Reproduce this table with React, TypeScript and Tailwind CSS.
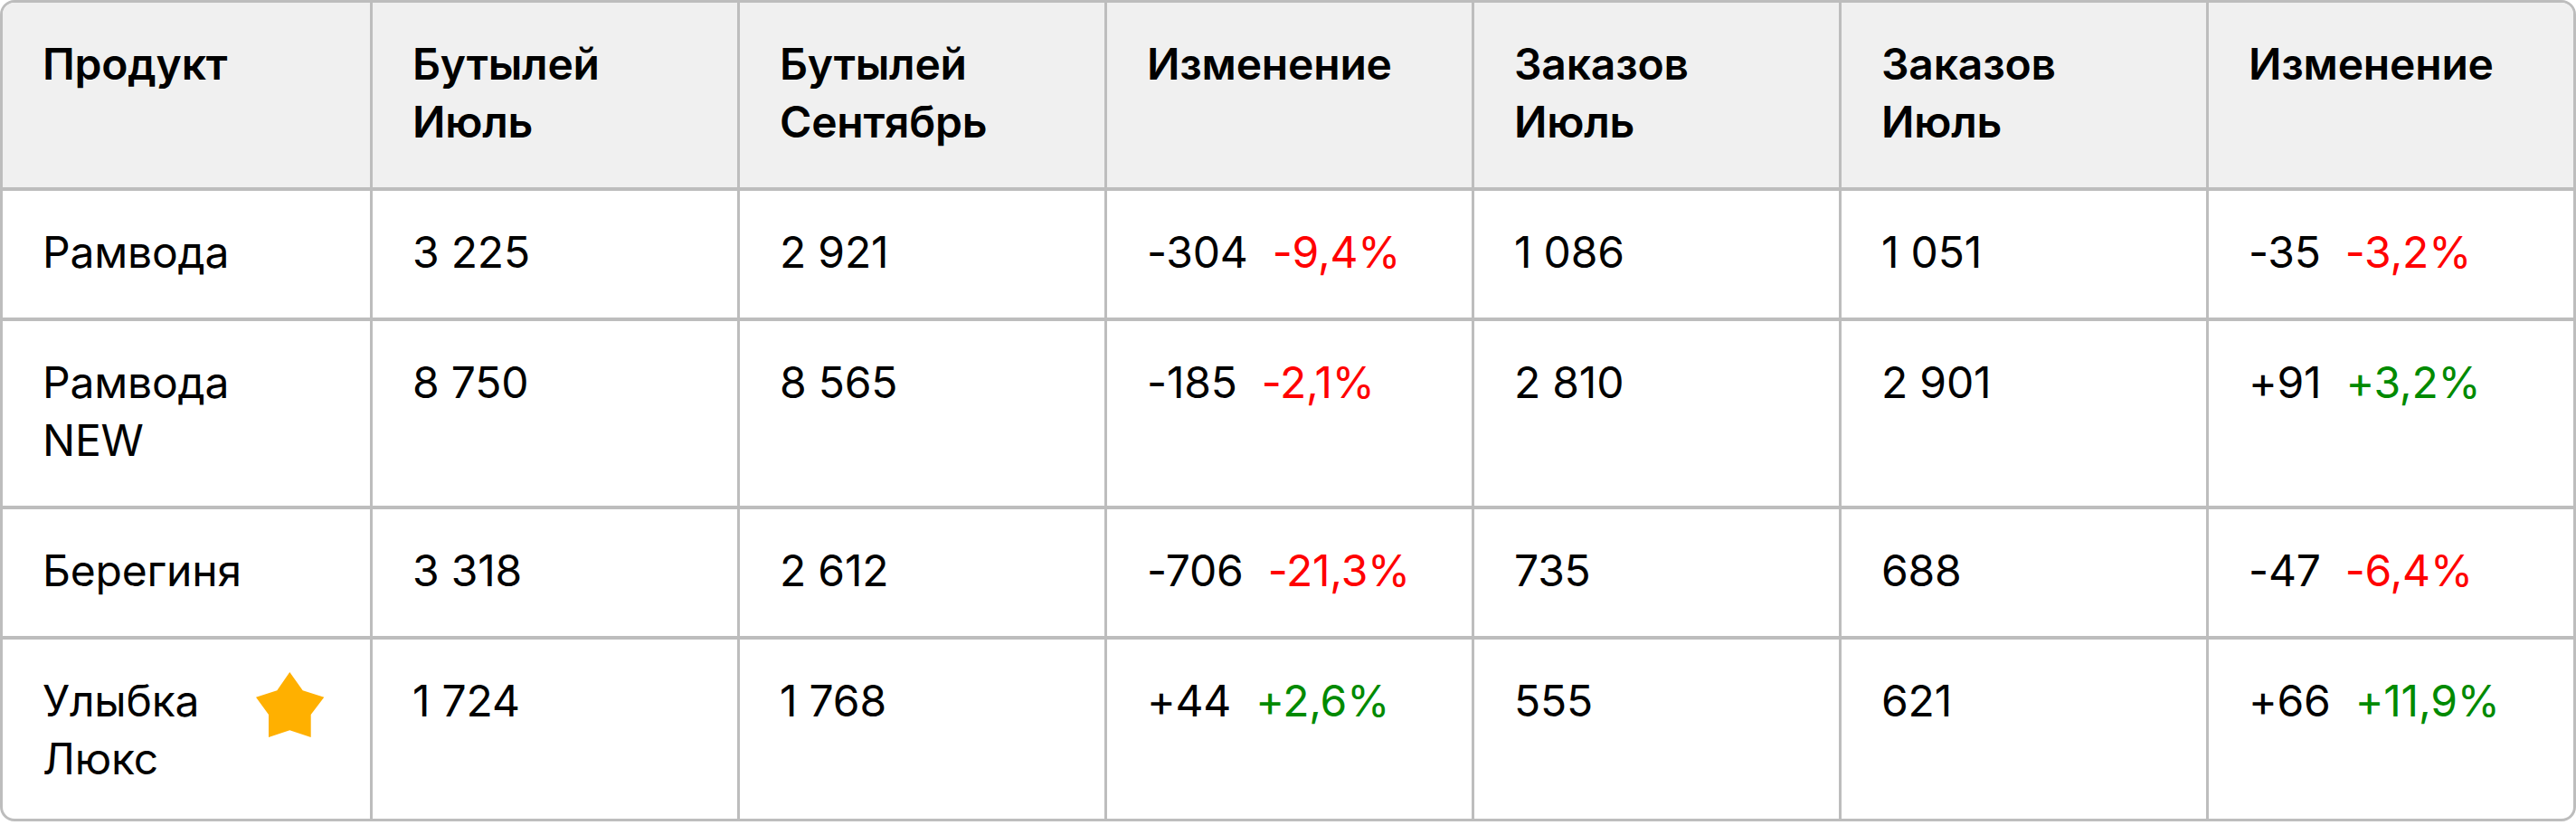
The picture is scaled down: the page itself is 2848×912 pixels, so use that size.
import React from "react";

type Row = {
    name: string,
    star?: boolean,
    bottlesJul: string,
    bottlesSep: string,
    bottlesDiff: string,
    bottlesPct: string,
    ordersA: string,
    ordersB: string,
    ordersDiff: string,
    ordersPct: string,
};

const headers = ["Продукт", "Бутылей Июль", "Бутылей Сентябрь", "Изменение", "Заказов Июль", "Заказов Июль", "Изменение"];

const rows: Row[] = [
    {name: "Рамвода", bottlesJul: "3 225", bottlesSep: "2 921", bottlesDiff: "-304", bottlesPct: "-9,4%", ordersA: "1 086", ordersB: "1 051", ordersDiff: "-35", ordersPct: "-3,2%"},
    {name: "Рамвода\nNEW", bottlesJul: "8 750", bottlesSep: "8 565", bottlesDiff: "-185", bottlesPct: "-2,1%", ordersA: "2 810", ordersB: "2 901", ordersDiff: "+91", ordersPct: "+3,2%"},
    {name: "Берегиня", bottlesJul: "3 318", bottlesSep: "2 612", bottlesDiff: "-706", bottlesPct: "-21,3%", ordersA: "735", ordersB: "688", ordersDiff: "-47", ordersPct: "-6,4%"},
    {name: "Улыбка Люкс", star: true, bottlesJul: "1 724", bottlesSep: "1 768", bottlesDiff: "+44", bottlesPct: "+2,6%", ordersA: "555", ordersB: "621", ordersDiff: "+66", ordersPct: "+11,9%"},
];

const Star = () => (
    <svg width="76" height="72" viewBox="0 0 76 72" className="shrink-0">
        <polygon
            fill="#FFB000"
            points="37.3,0 51.7,20.3 75.3,27.7 60.7,47 60.7,72 37.3,64.3 14,72 14,47 0,27.7 23.3,20.3"
        />
    </svg>
);

const Change = ({diff, pct}: { diff: string, pct: string }) => (
    <>
        <span>{diff}</span>
        <span className={pct.startsWith("-") ? "ml-[27px] text-[#ff0000]" : "ml-[27px] text-[#008a00]"}>{pct}</span>
    </>
);

export default function App() {
    return (
        <div className="w-[2848px] bg-white font-['Inter',sans-serif] text-[48px] leading-[64px] tracking-[-0.2px] text-black">
            <div className="grid grid-cols-7 overflow-hidden rounded-[16px] border-[3px] border-[#bdbdbd]">
                {headers.map((h, i) => (
                    <div key={i} className={`pt-[36px] pb-[40px] pl-[44px] pr-[40px] bg-[#f0f0f0] font-semibold ${i > 0 ? "border-l-[3px] border-[#bdbdbd]" : ""}`}>
                        {h}
                    </div>
                ))}
                {rows.map((r, ri) => {
                    const pad = ri === rows.length - 1 ? "pt-[36px] pb-[34px]" : "pt-[36px] pb-[40px]";
                    const cell = `${pad} pl-[44px] pr-[40px] border-t-[4px] border-l-[3px] border-[#bdbdbd]`;
                    return (
                        <React.Fragment key={r.name}>
                            <div className={`${pad} pl-[44px] pr-[50px] flex items-start justify-between gap-4 border-t-[4px] border-[#bdbdbd]`}>
                                <span className="whitespace-pre-line">{r.name}</span>
                                {r.star && <Star/>}
                            </div>
                            <div className={cell}>{r.bottlesJul}</div>
                            <div className={cell}>{r.bottlesSep}</div>
                            <div className={cell}>
                                <Change diff={r.bottlesDiff} pct={r.bottlesPct}/>
                            </div>
                            <div className={cell}>{r.ordersA}</div>
                            <div className={cell}>{r.ordersB}</div>
                            <div className={cell}>
                                <Change diff={r.ordersDiff} pct={r.ordersPct}/>
                            </div>
                        </React.Fragment>
                    );
                })}
            </div>
        </div>
    );
}
